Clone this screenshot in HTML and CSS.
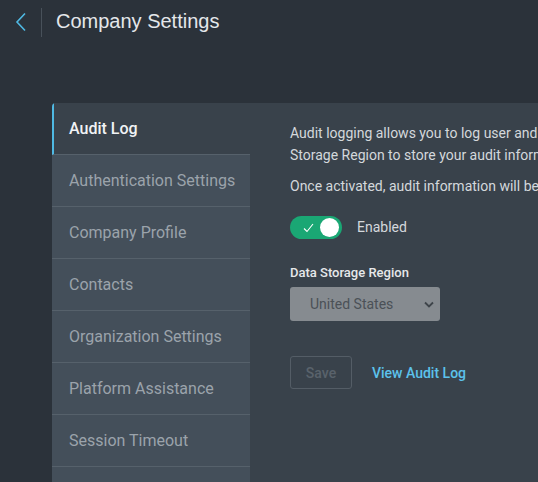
FILE: index.html
```html
<!DOCTYPE html>
<html lang="en">
<head>
    <meta charset="UTF-8">
    <meta name="viewport" content="width=device-width, initial-scale=1.0">
    <title>Company Settings</title>
    <link rel="stylesheet" href="styles.css">
</head>
<body>
    <header class="top-bar">
        <button class="back-button" aria-label="Back">
            <svg width="12" height="20" viewBox="0 0 12 20">
                <path d="M10 1.5 L2 10 L10 18.5" fill="none" stroke="#4fb9e3" stroke-width="1.6"/>
            </svg>
        </button>
        <h1 class="page-title">Company Settings</h1>
    </header>

    <div class="settings-panel">
        <nav class="side-nav">
            <a class="nav-item active">Audit Log</a>
            <a class="nav-item">Authentication Settings</a>
            <a class="nav-item">Company Profile</a>
            <a class="nav-item">Contacts</a>
            <a class="nav-item">Organization Settings</a>
            <a class="nav-item">Platform Assistance</a>
            <a class="nav-item">Session Timeout</a>
        </nav>

        <section class="content">
            <p class="intro">Audit logging allows you to log user and system activity. Select a Data<br>Storage Region to store your audit information.</p>
            <p class="intro">Once activated, audit information will be retained for one year.</p>

            <div class="toggle-row">
                <span class="toggle on">
                    <svg class="check" width="11" height="10" viewBox="0 0 11 10">
                        <path d="M1 5.5 L4 8.5 L10 1" fill="none" stroke="#fff" stroke-width="1.1"/>
                    </svg>
                    <span class="knob"></span>
                </span>
                <span class="toggle-label">Enabled</span>
            </div>

            <label class="field-label">Data Storage Region</label>
            <div class="select-box">
                <span>United States</span>
                <svg width="10" height="7" viewBox="0 0 10 7">
                    <path d="M1 1.5 L5 5.5 L9 1.5" fill="none" stroke="#3e444a" stroke-width="1.8"/>
                </svg>
            </div>

            <div class="actions">
                <button class="save-button" disabled>Save</button>
                <a class="view-link">View Audit Log</a>
            </div>
        </section>
    </div>
</body>
</html>
```

FILE: styles.css
```css
body {
    margin: 0;
    background-color: #2b323a;
    font-family: Roboto, "Liberation Sans", sans-serif;
    height: 482px;
    overflow: hidden;
}

.top-bar {
    display: flex;
    align-items: center;
    height: 44px;
}

.back-button {
    background: none;
    border: none;
    padding: 0 14px 0 15px;
    height: 29px;
    display: flex;
    align-items: center;
    border-right: 1px solid #48515a;
    cursor: pointer;
}

.page-title {
    margin: 0 0 0 14px;
    font-family: "Liberation Sans", Arial, sans-serif;
    font-size: 20px;
    font-weight: normal;
    color: #e4e7ea;
    position: relative;
    top: -1px;
}

.settings-panel {
    display: flex;
    margin: 59px 0 0 52px;
    height: 379px;
    background-color: #39424b;
    border-top-left-radius: 4px;
    overflow: hidden;
}

.side-nav {
    width: 198px;
    flex-shrink: 0;
    background-color: #444f5a;
    display: flex;
    flex-direction: column;
}

.nav-item {
    display: block;
    height: 51px;
    line-height: 51px;
    padding-left: 17px;
    font-size: 16px;
    color: #9ba3ab;
    border-bottom: 1px solid #56616b;
    cursor: pointer;
}

.nav-item.active {
    background-color: #39424b;
    color: #f1f3f5;
    font-weight: 500;
    border-left: 2px solid #4fb9e3;
    padding-left: 15px;
}

.content {
    padding: 19px 0 0 40px;
    white-space: nowrap;
    min-width: 0;
    overflow: hidden;
}

.intro {
    margin: 0 0 9px;
    font-size: 14px;
    line-height: 22px;
    color: #d4d8dc;
}

.toggle-row {
    display: flex;
    align-items: center;
    margin-top: 19px;
}

.toggle {
    position: relative;
    display: inline-block;
    width: 52px;
    height: 23px;
    border-radius: 12px;
    background-color: #1aa774;
}

.toggle .check {
    position: absolute;
    left: 13px;
    top: 7px;
}

.toggle .knob {
    position: absolute;
    right: 3px;
    top: 2px;
    width: 19px;
    height: 19px;
    border-radius: 50%;
    background-color: #fff;
}

.toggle-label {
    margin-left: 15px;
    font-size: 14px;
    color: #d4d8dc;
    position: relative;
    top: -1px;
}

.field-label {
    display: block;
    margin-top: 26px;
    font-size: 13px;
    line-height: 15px;
    font-weight: 500;
    color: #e6e8ea;
}

.select-box {
    display: flex;
    align-items: center;
    justify-content: space-between;
    width: 150px;
    height: 34px;
    box-sizing: border-box;
    margin-top: 7px;
    padding: 0 6px 0 20px;
    background-color: #868b90;
    border-radius: 3px;
    font-size: 14px;
    color: #4b5157;
}

.actions {
    display: flex;
    align-items: center;
    margin-top: 35px;
}

.save-button {
    width: 62px;
    height: 33px;
    background: transparent;
    border: 1px solid #545d66;
    border-radius: 3px;
    color: #59626b;
    font-family: Roboto, sans-serif;
    font-size: 14px;
    font-weight: 500;
}

.view-link {
    margin-left: 20px;
    font-size: 14px;
    font-weight: 500;
    color: #5cc2ec;
    cursor: pointer;
}
```
